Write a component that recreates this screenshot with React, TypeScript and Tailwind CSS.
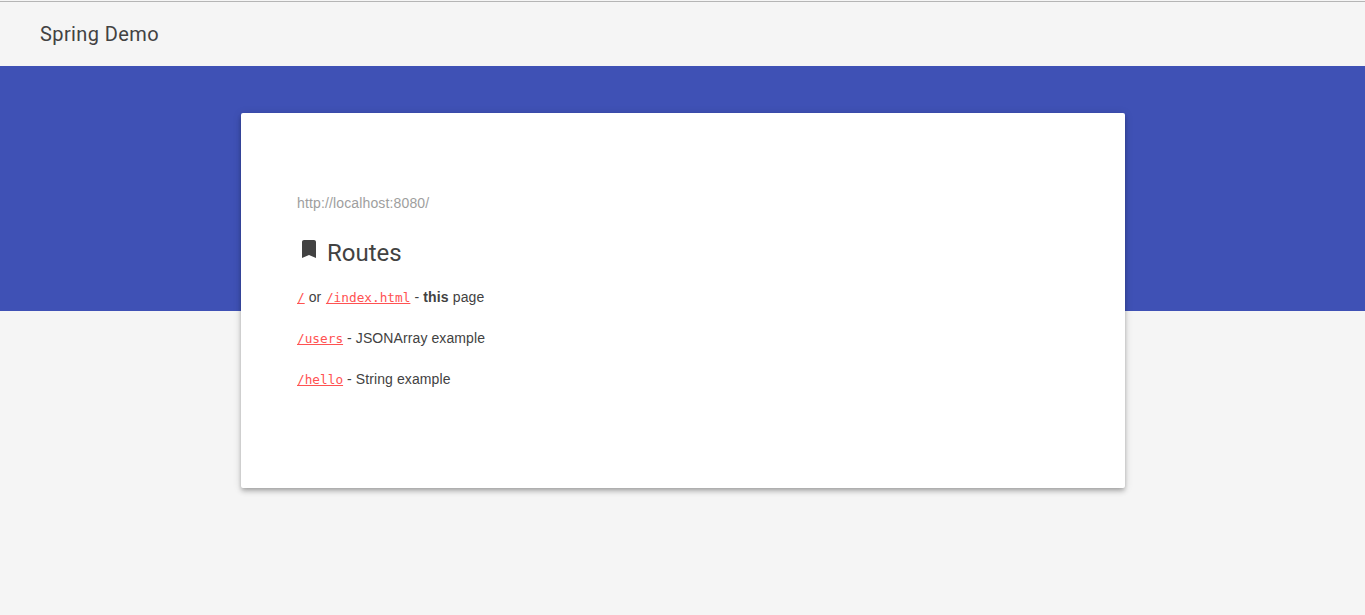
import React from 'react';

const RouteLink = ({ path }: { path: string }) => (
  <a href={path} className="text-[#ff5252] underline">
    <code className="font-['DejaVu_Sans_Mono',monospace] text-[12.75px] leading-none tracking-normal">{path}</code>
  </a>
);

const App = () => {
  return (
    <div className="h-[615px] overflow-hidden bg-[#f5f5f5] pt-px font-['Liberation_Sans',Arial,sans-serif] text-[#424242]">
      <header className="flex h-[65px] items-center border-t border-[#b5b5b5] px-10">
        <span className="font-[Roboto,sans-serif] text-xl tracking-[0.4px]">Spring Demo</span>
      </header>
      <div className="h-[245px] bg-[#3f51b5]"></div>
      <main className="relative ml-[241px] -mt-[198px] h-[375px] w-[884px] rounded-[2px] bg-white px-14 pt-[78px] text-sm leading-6 shadow-[0_4px_5px_0_rgba(0,0,0,0.14),0_1px_10px_0_rgba(0,0,0,0.12),0_2px_4px_-1px_rgba(0,0,0,0.2)]">
        <div className="tracking-[0.14px] text-[#9e9e9e]">http://localhost:8080/</div>
        <h3 className="mt-3.5 flex h-12 items-center font-[Roboto,sans-serif] text-2xl">
          <svg viewBox="0 0 24 24" className="mr-1.5 -mt-2 size-6" fill="currentColor">
            <path d="M17 3H7c-1.1 0-1.99.9-1.99 2L5 21l7-3 7 3V5c0-1.1-.9-2-2-2z" />
          </svg>
          Routes
        </h3>
        <div className="mt-2 flex flex-col gap-[17px] tracking-[0.1px]">
          <p className="h-6">
            <RouteLink path="/" /> <span className="mr-[0.6px]">or</span> <RouteLink path="/index.html" /> - <b className="tracking-[0.2px]">this</b> page
          </p>
          <p className="h-6">
            <RouteLink path="/users" /> - JSONArray example
          </p>
          <p className="h-6">
            <RouteLink path="/hello" /> - String example
          </p>
        </div>
      </main>
    </div>
  );
};

export default App;
